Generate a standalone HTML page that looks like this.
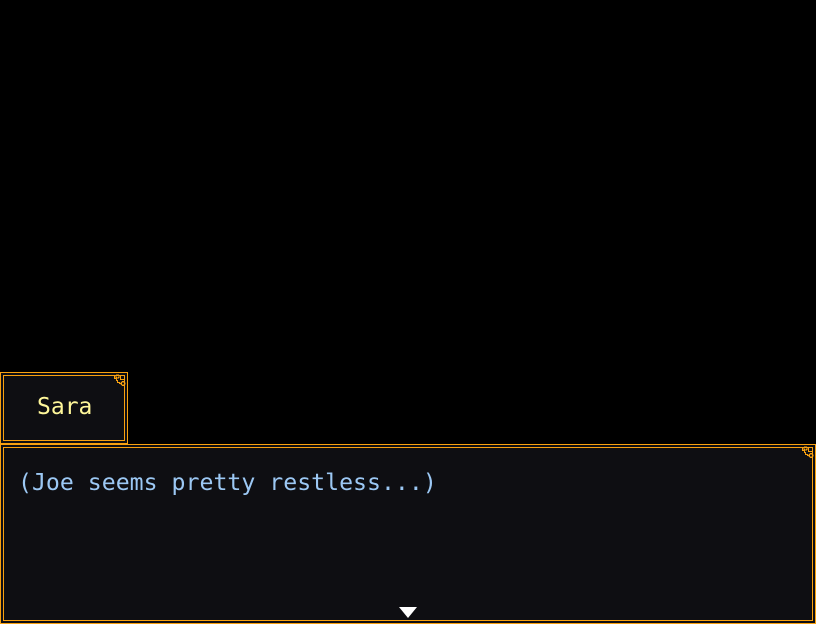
<!DOCTYPE html>
<html><head><meta charset="utf-8"><style>
html,body{margin:0;padding:0;background:#000;width:816px;height:624px;overflow:hidden;position:relative}
.box{position:absolute;background:#0e0e12;box-sizing:border-box;border:1px solid #f7a010}
.inner{position:absolute;left:2px;top:2px;right:2px;bottom:2px;border:1px solid #f7a010}
.t{position:absolute;font-family:"DejaVu Sans Mono","Liberation Mono",monospace;white-space:pre}
svg{position:absolute}
</style></head><body>
<div class="box" style="left:0;top:372px;width:128px;height:72px">
 <div class="inner"></div>
 <div class="t" style="left:36px;top:21px;font-size:23px;color:#fff79a">Sara</div>
 <svg style="right:0;top:0" width="16" height="16" viewBox="0 0 16 16" shape-rendering="crispEdges">
  <g fill="none" stroke="#f7a010" stroke-width="1.3">
   <path d="M0 2.5H3.5V5.5H5.5V7.5H6.5V9.5H8.5V10.5H10"/>
   <circle cx="6.5" cy="3.5" r="1.6"/>
   <rect x="9.5" y="2.5" width="4" height="4"/>
   <circle cx="12" cy="10.5" r="1.8"/>
  </g>
 </svg>
</div>
<div class="box" style="left:0;top:444px;width:816px;height:180px">
 <div class="inner"></div>
 <div class="t" style="left:17px;top:24px;font-size:23.2px;color:#9cc8f4">(Joe seems pretty restless...)</div>
 <svg style="right:0;top:0" width="16" height="16" viewBox="0 0 16 16" shape-rendering="crispEdges">
  <g fill="none" stroke="#f7a010" stroke-width="1.3">
   <path d="M0 2.5H3.5V5.5H5.5V7.5H6.5V9.5H8.5V10.5H10"/>
   <circle cx="6.5" cy="3.5" r="1.6"/>
   <rect x="9.5" y="2.5" width="4" height="4"/>
   <circle cx="12" cy="10.5" r="1.8"/>
  </g>
 </svg>
 <div style="position:absolute;left:398px;top:162px;width:0;height:0;border-left:9.5px solid transparent;border-right:9.5px solid transparent;border-top:11px solid #fff"></div>
</div>
</body></html>
